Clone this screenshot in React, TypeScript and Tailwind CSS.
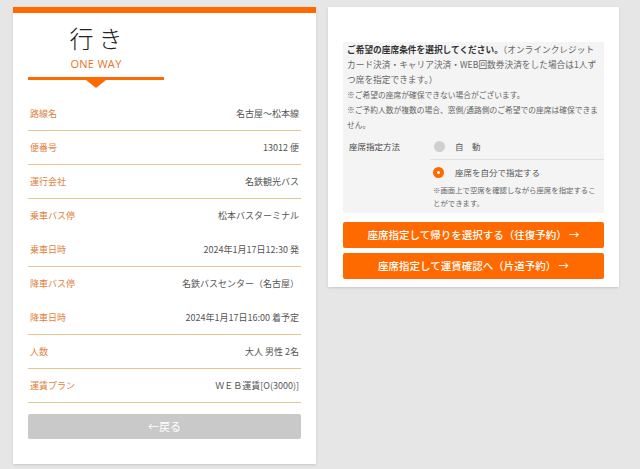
import React from "react";

const rows: { label: string; value: string; line: boolean }[] = [
  { label: "路線名", value: "名古屋〜松本線", line: true },
  { label: "便番号", value: "13012 便", line: true },
  { label: "運行会社", value: "名鉄観光バス", line: true },
  { label: "乗車バス停", value: "松本バスターミナル", line: false },
  { label: "乗車日時", value: "2024年1月17日12:30 発", line: true },
  { label: "降車バス停", value: "名鉄バスセンター（名古屋）", line: false },
  { label: "降車日時", value: "2024年1月17日16:00 着予定", line: true },
  { label: "人数", value: "大人 男性 2名", line: true },
  { label: "運賃プラン", value: "ＷＥＢ運賃[O(3000)]", line: true },
];

export default function App() {
  return (
    <div
      className="min-h-[469px] w-[640px] bg-[#e6e6e6] pl-[13px] pt-[7px] flex items-start gap-[12px]"
      style={{ fontFamily: '"Noto Sans CJK JP", "Noto Sans", sans-serif' }}
    >
      {/* left: one way summary */}
      <div className="w-[303px] bg-white border-t-[6px] border-[#ff6a00] px-[15px] pb-[25px] shadow-sm">
        <div className="w-[136px] pt-[11px] flex flex-col items-center">
          <div className="h-[28px] text-[24px] leading-[28px] tracking-[5px] pl-[5px] font-light text-[#222]">行き</div>
          <div
            className="mt-[4px] text-[11px] leading-[15px] tracking-[0.3px] text-[#e8742a]"
            style={{ fontFamily: '"Open Sans", "Noto Sans", sans-serif' }}
          >
            ONE WAY
          </div>
          <div className="mt-[6px] h-[3px] w-full bg-[#ff6a00]" />
          <div className="h-0 w-0 border-x-[10px] border-t-[8px] border-x-transparent border-t-[#ff6a00]" />
        </div>

        <div className="mt-[9px]">
          {rows.map((r) => (
            <div
              key={r.label}
              className={
                r.line
                  ? "h-[34px] px-[2px] flex items-center justify-between border-b border-[#e6c690] text-[9px]"
                  : "h-[34px] px-[2px] flex items-center justify-between border-b border-transparent text-[9px]"
              }
            >
              <span className="text-[#e0823c]">{r.label}</span>
              <span className="text-[#555]">{r.value}</span>
            </div>
          ))}
        </div>

        <button
          type="button"
          className="mt-[11px] h-[25px] w-full rounded-[2px] bg-[#c9c9c9] text-[11px] text-white"
        >
          ←戻る
        </button>
      </div>

      {/* right: seat options */}
      <div className="w-[291px] bg-white px-[15px] pt-[35px] pb-[8px] shadow-sm">
        <div className="bg-[#f4f4f4] text-[#666]">
          <p className="px-[4px] text-[8.7px] leading-[15px] whitespace-nowrap">
            <span className="font-bold text-[#333]">ご希望の座席条件を選択してください。</span>
            （オンラインクレジット
            <br />
            カード決済・キャリア決済・WEB回数券決済をした場合は1人ず
            <br />
            つ席を指定できます。）
          </p>
          <p className="px-[4px] text-[7.75px] leading-[15px] whitespace-nowrap">
            ※ご希望の座席が確保できない場合がございます。
            <br />
            ※ご予約人数が複数の場合、窓側/通路側のご希望での座席は確保できま
            <br />
            せん。
          </p>

          <div className="mt-[1px] flex">
            <div className="w-[87px] pl-[6px] h-[27px] flex items-center text-[8.5px] text-[#444]">
              座席指定方法
            </div>
            <div className="flex-1">
              <div className="h-[27px] pl-[4px] flex items-center gap-[10px] border-b border-[#e0e0e0]">
                <span className="h-[11px] w-[11px] rounded-full bg-[#cfcfcf]" />
                <span className="text-[8.5px] text-[#555]">自　動</span>
              </div>
              <div className="h-[22px] pl-[3px] mt-[1px] flex items-center gap-[11px]">
                <span className="h-[11px] w-[11px] rounded-full bg-[#ff6a00] flex items-center justify-center">
                  <span className="h-[3px] w-[3px] rounded-full bg-white" />
                </span>
                <span className="text-[8.5px] text-[#555]">座席を自分で指定する</span>
              </div>
              <p className="pl-[3px] pb-[4px] text-[7.4px] leading-[13px] text-[#666] whitespace-nowrap">
                ※画面上で空席を確認しながら座席を指定するこ
                <br />
                とができます。
              </p>
            </div>
          </div>
        </div>

        <button
          type="button"
          className="mt-[9px] h-[26px] w-full rounded-[2px] bg-[#ff6a00] text-[10.5px] font-medium text-white"
        >
          座席指定して帰りを選択する（往復予約） →
        </button>
        <button
          type="button"
          className="mt-[5px] h-[26px] w-full rounded-[2px] bg-[#ff6a00] text-[10.5px] font-medium text-white"
        >
          座席指定して運賃確認へ（片道予約） →
        </button>
      </div>
    </div>
  );
}
